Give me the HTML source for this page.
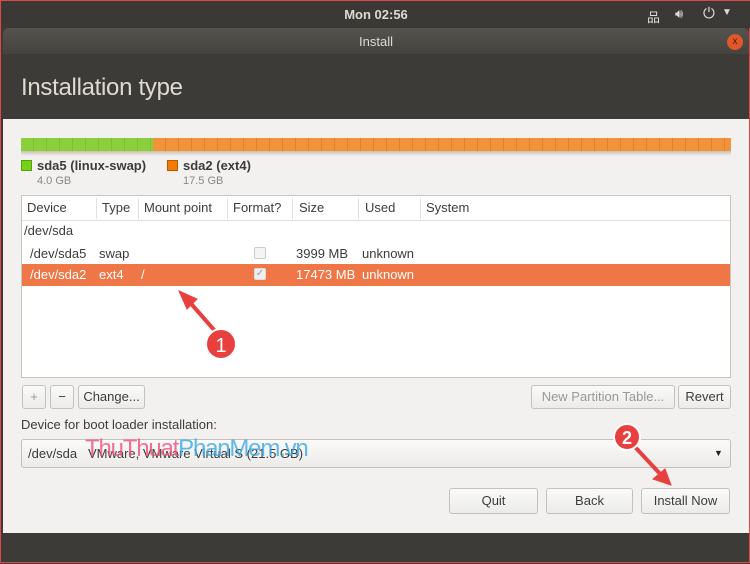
<!DOCTYPE html><html><head><style>
*{margin:0;padding:0;box-sizing:border-box}
body{width:750px;height:563px;overflow:hidden;position:relative;font-family:"Liberation Sans",sans-serif;background:#3c3b37;border:1px solid #e04848}
.a{position:absolute}
.t{font-size:13px;color:#3c3c3c;white-space:nowrap}
.btn{position:absolute;border:1px solid #c4c1bb;border-radius:3px;background:linear-gradient(#fafafa,#ecebe9);font-size:13px;color:#3c3c3c;text-align:center}
</style></head><body>
<div class="a" style="left:0;top:0;width:750px;height:27px;background:#3a3935"></div>
<div class="a t" style="left:0;width:750px;top:6px;text-align:center;color:#dfdbd2;font-weight:bold;font-size:13px">Mon 02:56</div>
<div class="a" style="left:646px;top:6px;color:#ddd;font-size:13px">品</div>
<div class="a" style="left:674px;top:5px;color:#ddd;font-size:13px">🔊︎</div>
<div class="a" style="left:702px;top:4px;color:#ddd;font-size:15px">⏻</div>
<div class="a" style="left:721px;top:6px;color:#ddd;font-size:10px">▼</div>
<div class="a" style="left:2px;top:27px;width:746px;height:26px;background:linear-gradient(#55534e,#45433f);border-radius:6px 6px 0 0"></div>
<div class="a t" style="left:0;width:750px;top:33px;text-align:center;color:#dfdbd2">Install</div>
<div class="a" style="left:726px;top:33px;width:16px;height:16px;border-radius:50%;background:#e0572a;color:#4a1a0a;font-size:10px;text-align:center;line-height:16px">x</div>
<div class="a" style="left:2px;top:53px;width:746px;height:65px;background:#3c3b37"></div>
<div class="a" style="left:20px;top:73px;color:#dfdbd2;font-size:24px;letter-spacing:-0.3px">Installation type</div>
<div class="a" style="left:2px;top:118px;width:746px;height:414px;background:#f2f1f0"></div>
<div class="a" style="left:20px;top:137px;width:132px;height:13px;background:repeating-linear-gradient(90deg,#8ccf3c 0 12px,#7fbf32 12px 13px)"></div>
<div class="a" style="left:152px;top:137px;width:578px;height:13px;background:repeating-linear-gradient(90deg,#f0933a 0 12px,#dc8230 12px 13px)"></div>
<div class="a" style="left:20px;top:150px;width:710px;height:5px;background:linear-gradient(#c8bfb0,#f2f1f0)"></div>
<div class="a" style="left:20px;top:159px;width:11px;height:11px;background:#73d216;border:1px solid #5a9e10"></div>
<div class="a t" style="left:36px;top:157px;font-weight:bold">sda5 (linux-swap)</div>
<div class="a t" style="left:36px;top:174px;font-size:11px;color:#888">4.0 GB</div>
<div class="a" style="left:166px;top:159px;width:11px;height:11px;background:#f57900;border:1px solid #b85b00"></div>
<div class="a t" style="left:182px;top:157px;font-weight:bold">sda2 (ext4)</div>
<div class="a t" style="left:182px;top:174px;font-size:11px;color:#888">17.5 GB</div>
<div class="a" style="left:20px;top:194px;width:710px;height:183px;background:#fff;border:1px solid #c8c5c0"></div>
<div class="a" style="left:21px;top:195px;width:708px;height:25px;background:#fff;border-bottom:1px solid #ddd"></div>
<div class="a t" style="left:26px;top:199px">Device</div>
<div class="a t" style="left:101px;top:199px">Type</div>
<div class="a t" style="left:143px;top:199px">Mount point</div>
<div class="a t" style="left:232px;top:199px">Format?</div>
<div class="a t" style="left:298px;top:199px">Size</div>
<div class="a t" style="left:364px;top:199px">Used</div>
<div class="a t" style="left:425px;top:199px">System</div>
<div class="a" style="left:95px;top:197px;width:1px;height:21px;background:#e3e1dd"></div>
<div class="a" style="left:137px;top:197px;width:1px;height:21px;background:#e3e1dd"></div>
<div class="a" style="left:226px;top:197px;width:1px;height:21px;background:#e3e1dd"></div>
<div class="a" style="left:291px;top:197px;width:1px;height:21px;background:#e3e1dd"></div>
<div class="a" style="left:357px;top:197px;width:1px;height:21px;background:#e3e1dd"></div>
<div class="a" style="left:419px;top:197px;width:1px;height:21px;background:#e3e1dd"></div>
<div class="a t" style="left:23px;top:222px">/dev/sda</div>
<div class="a t" style="left:29px;top:245px">/dev/sda5</div>
<div class="a t" style="left:98px;top:245px">swap</div>
<div class="a" style="left:253px;top:246px;width:12px;height:12px;border:1px solid #ccc;border-radius:2px;background:#f4f4f4"></div>
<div class="a t" style="left:295px;top:245px">3999 MB</div>
<div class="a t" style="left:361px;top:245px">unknown</div>
<div class="a" style="left:21px;top:263px;width:708px;height:22px;background:#ef7747"></div>
<div class="a t" style="left:29px;top:266px;color:#fff">/dev/sda2</div>
<div class="a t" style="left:98px;top:266px;color:#fff">ext4</div>
<div class="a t" style="left:140px;top:266px;color:#fff">/</div>
<div class="a" style="left:253px;top:267px;width:12px;height:12px;border:1px solid #ddd;border-radius:2px;background:#eee;color:#999;font-size:10px;line-height:10px;text-align:center">✓</div>
<div class="a t" style="left:295px;top:266px;color:#fff">17473 MB</div>
<div class="a t" style="left:361px;top:266px;color:#fff">unknown</div>
<div class="btn" style="left:21px;top:384px;width:24px;height:24px;color:#999;line-height:22px">+</div>
<div class="btn" style="left:49px;top:384px;width:24px;height:24px;line-height:22px">−</div>
<div class="btn" style="left:77px;top:384px;width:67px;height:24px;line-height:22px">Change...</div>
<div class="btn" style="left:530px;top:384px;width:144px;height:24px;line-height:22px;color:#999">New Partition Table...</div>
<div class="btn" style="left:677px;top:384px;width:53px;height:24px;line-height:22px">Revert</div>
<div class="a t" style="left:20px;top:416px">Device for boot loader installation:</div>
<div class="btn" style="left:20px;top:438px;width:710px;height:29px;text-align:left;padding-left:6px;line-height:27px">/dev/sda&nbsp;&nbsp; VMware, VMware Virtual S (21.5 GB)</div>
<div class="a" style="left:713px;top:447px;font-size:9px;color:#222">▼</div>
<div class="a" style="left:84px;top:434px;font-size:24px;letter-spacing:-1.2px;white-space:nowrap;opacity:.8"><span style="color:#f0507a">ThuThuat</span><span style="color:#3aa8e8">PhanMem.vn</span></div>
<div class="btn" style="left:448px;top:487px;width:89px;height:26px;line-height:24px">Quit</div>
<div class="btn" style="left:545px;top:487px;width:87px;height:26px;line-height:24px">Back</div>
<div class="btn" style="left:640px;top:487px;width:89px;height:26px;line-height:24px">Install Now</div>
<svg class="a" style="left:0;top:0" width="750" height="563">
<g fill="#e8403e" stroke="#e8403e">
<line x1="214" y1="330" x2="186" y2="298" stroke-width="4"/>
<polygon points="178,290 196,298 186,308" />
<circle cx="220" cy="343" r="15" stroke="#fff" stroke-width="2"/>
<line x1="634" y1="446" x2="662" y2="476" stroke-width="4"/>
<polygon points="670,484 652,478 664,468"/>
<circle cx="626" cy="436" r="13" stroke="#fff" stroke-width="2"/>
</g>
<text x="220" y="351" fill="#fff" font-size="20" font-family="Liberation Sans" text-anchor="middle">1</text>
<text x="626" y="443" fill="#fff" font-size="18" font-family="Liberation Sans" font-weight="bold" text-anchor="middle">2</text>
</svg>
</body></html>
